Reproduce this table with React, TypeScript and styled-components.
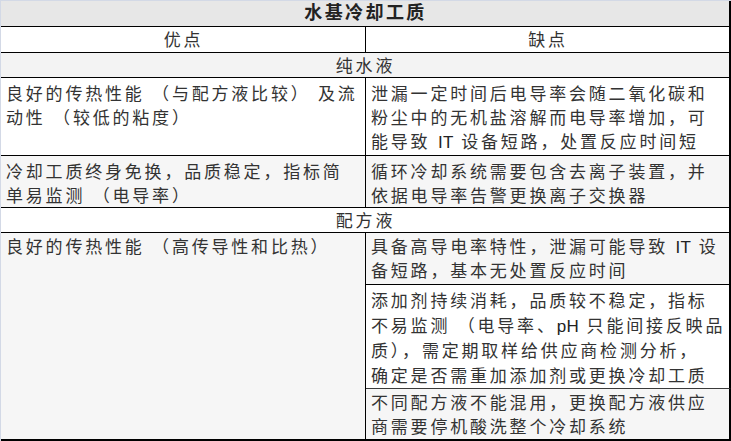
import React from "react";
import styled, { createGlobalStyle } from "styled-components";

const GlobalStyles = createGlobalStyle`
    body {
        margin: 0;
        background: #fff;
    }
`;

type Edge = "thin" | "gray" | "thick";

const edges: Record<Edge, string> = {
    thin: "1px solid #000",
    gray: "1px solid #3a3a3a",
    thick: "2px solid #000",
};

const Sheet = styled.div`
    width: 731px;
    box-sizing: border-box;
    border-top: 1px solid #d3d9e6;
    border-left: 1px solid #d3d9e6;
    display: grid;
    grid-template-columns: 365px 365px;
    grid-template-rows: 26px 26px 25px 78px 52px 25px 52px 104px 52px;
    font-family: "Liberation Sans", "Noto Sans CJK SC", sans-serif;
    font-size: 17px;
    color: #333;
`;

const Cell = styled.div<{
    $bg?: string;
    $wide?: boolean;
    $right?: boolean;
    $center?: boolean;
    $pad?: number;
    $lh?: number;
    $edge?: Edge;
}>`
    box-sizing: border-box;
    display: flex;
    flex-direction: column;
    justify-content: flex-start;
    align-items: ${(p) => (p.$center ? "center" : "flex-start")};
    grid-column: ${(p) => (p.$wide ? "1 / span 2" : "auto")};
    padding: ${(p) => p.$pad ?? 5}px 4px 0 5px;
    background: ${(p) => p.$bg || "#fff"};
    border-bottom: ${(p) => edges[p.$edge || "thin"]};
    border-right: ${(p) => (p.$right || p.$wide ? "2px solid #000" : "1px solid #000")};
    line-height: ${(p) => p.$lh ?? 24}px;
    letter-spacing: 2.8px;
    overflow: hidden;
`;

const Title = styled.span`
    font-weight: bold;
    font-size: 18px;
    letter-spacing: 2.4px;
    color: #222;
`;

const Line = styled.div`
    white-space: nowrap;
`;

const Latin = styled.span`
    letter-spacing: 0.3px;
    color: #222;
`;

type Row = { pros: string[]; cons: string[]; bg: string };

const pureRows: Row[] = [
    {
        pros: ["良好的传热性能 （与配方液比较） 及流", "动性 （较低的粘度）"],
        cons: [
            "泄漏一定时间后电导率会随二氧化碳和",
            "粉尘中的无机盐溶解而电导率增加，可",
            "能导致 IT 设备短路，处置反应时间短",
        ],
        bg: "#fff",
    },
    {
        pros: ["冷却工质终身免换，品质稳定，指标简", "单易监测 （电导率）"],
        cons: ["循环冷却系统需要包含去离子装置，并", "依据电导率告警更换离子交换器"],
        bg: "#f6f6f6",
    },
];

const mixCons: { lines: string[]; bg: string; edge: Edge; pad: number; lh: number }[] = [
    {
        lines: ["具备高导电率特性，泄漏可能导致 IT 设", "备短路，基本无处置反应时间"],
        bg: "#f6f6f6",
        edge: "thin",
        pad: 3,
        lh: 24,
    },
    {
        lines: [
            "添加剂持续消耗，品质较不稳定，指标",
            "不易监测 （电导率、pH 只能间接反映品",
            "质），需定期取样给供应商检测分析，",
            "确定是否需重加添加剂或更换冷却工质",
        ],
        bg: "#fff",
        edge: "gray",
        pad: 4,
        lh: 25,
    },
    {
        lines: ["不同配方液不能混用，更换配方液供应", "商需要停机酸洗整个冷却系统"],
        bg: "#f6f6f6",
        edge: "thick",
        pad: 3,
        lh: 24,
    },
];

// latin runs (IT, pH) are set tight, the CJK keeps its wide spacing
const Text: React.FC<{ text: string }> = ({ text }) => (
    <Line>
        {text.split(/([A-Za-z]+)/).map((part, i) =>
            /^[A-Za-z]+$/.test(part) ? <Latin key={i}>{part}</Latin> : part
        )}
    </Line>
);

const Lines: React.FC<{ lines: string[] }> = ({ lines }) => (
    <>
        {lines.map((l) => (
            <Text key={l} text={l} />
        ))}
    </>
);

const App: React.FC = () => {
    return (
        <>
            <GlobalStyles />
            <Sheet>
                <Cell $wide $center $pad={0} $bg="#e7e7e7">
                    <Title>水基冷却工质</Title>
                </Cell>
                <Cell $center $pad={2}>
                    优点
                </Cell>
                <Cell $center $pad={2} $right>
                    缺点
                </Cell>

                <Cell $wide $center $pad={2} $bg="#f3f3f3">
                    纯水液
                </Cell>
                {pureRows.map((r) => (
                    <React.Fragment key={r.cons[0]}>
                        <Cell $bg={r.bg}>
                            <Lines lines={r.pros} />
                        </Cell>
                        <Cell $bg={r.bg} $right>
                            <Lines lines={r.cons} />
                        </Cell>
                    </React.Fragment>
                ))}

                <Cell $wide $center $pad={2}>
                    配方液
                </Cell>
                <Cell $pad={3} $bg="#f6f6f6" $edge="thick" style={{ gridRow: "7 / span 3" }}>
                    <Text text="良好的传热性能 （高传导性和比热）" />
                </Cell>
                {mixCons.map((c) => (
                    <Cell
                        key={c.lines[0]}
                        $pad={c.pad}
                        $lh={c.lh}
                        $right
                        $bg={c.bg}
                        $edge={c.edge}
                        style={{ gridColumn: 2 }}
                    >
                        <Lines lines={c.lines} />
                    </Cell>
                ))}
            </Sheet>
        </>
    );
};

export default App;
